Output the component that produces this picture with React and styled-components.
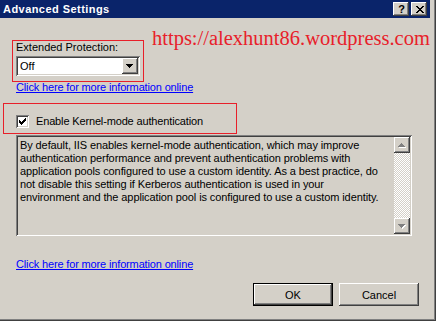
import React from 'react';
import styled, { createGlobalStyle } from 'styled-components';

const Global = createGlobalStyle`
  html, body { margin: 0; padding: 0; background: #d4d0c8; }
  body { width: 436px; height: 321px; overflow: hidden; }
`;

const raised = `
  box-shadow: inset -1px -1px #404040, inset 1px 1px #ffffff, inset -2px -2px #808080, inset 2px 2px #d4d0c8;
`;
const sunken = `
  box-shadow: inset 1px 1px #808080, inset -1px -1px #ffffff, inset 2px 2px #404040, inset -2px -2px #d4d0c8;
`;

const Window = styled.div`
  position: relative;
  width: 436px;
  height: 321px;
  box-sizing: border-box;
  padding: 0 6px 3px 0;
  background: #d4d0c8;
  box-shadow: inset -1px -1px #404040, inset -2px -2px #808080;
  display: flex;
  flex-direction: column;
  font-family: "Liberation Sans", Arial, sans-serif;
  font-size: 11px;
  color: #000;
`;

const TitleBar = styled.div`
  height: 18px;
  flex: none;
  background: #0a246a;
  display: flex;
  align-items: center;
  padding: 0 3px 0 3px;
  gap: 2px;
`;

const Title = styled.div`
  flex: 1;
  color: #fff;
  font-weight: bold;
  font-size: 11px;
  letter-spacing: 0.45px;
  white-space: nowrap;
`;

const CaptionButton = styled.div`
  width: 16px;
  height: 14px;
  box-sizing: border-box;
  background: #d4d0c8;
  ${raised}
  display: flex;
  align-items: center;
  justify-content: center;
  font-weight: bold;
  font-size: 11px;
  line-height: 14px;
  padding-left: 1px;
`;

const Content = styled.div`
  flex: 1;
  display: flex;
  flex-direction: column;
`;

const Watermark = styled.div`
  position: absolute;
  left: 152px;
  top: 28px;
  font-family: "Liberation Serif", "Times New Roman", serif;
  font-size: 20.5px;
  line-height: 1;
  color: #e8202a;
  white-space: nowrap;
`;

const RedFrame = styled.div`
  box-sizing: border-box;
  border: 1px solid #e8202a;
  margin-left: ${p => p.$left}px;
  margin-top: ${p => p.$top}px;
  width: ${p => p.$w}px;
  height: ${p => p.$h}px;
  padding: ${p => p.$pad};
  display: flex;
  flex-direction: ${p => p.$dir || 'column'};
  align-items: ${p => p.$align || 'stretch'};
`;

const Label = styled.div`
  line-height: 13px;
  white-space: nowrap;
`;

const Select = styled.div`
  margin-top: 2px;
  width: 124px;
  height: 20px;
  box-sizing: border-box;
  padding: 2px;
  background: #fff;
  ${sunken}
  display: flex;
  align-items: center;
`;

const SelectValue = styled.div`
  flex: 1;
  padding-left: 2px;
  line-height: 16px;
`;

const ArrowButton = styled.div`
  width: 16px;
  height: 16px;
  box-sizing: border-box;
  background: #d4d0c8;
  ${raised}
  display: flex;
  align-items: center;
  justify-content: center;
`;

const Link = styled.a`
  display: block;
  width: fit-content;
  margin-left: 16px;
  margin-top: ${p => p.$top}px;
  line-height: 13px;
  color: #0000ff;
  text-decoration: underline;
  letter-spacing: -0.15px;
  white-space: nowrap;
  cursor: pointer;
`;

const CheckBox = styled.div`
  width: 13px;
  height: 13px;
  box-sizing: border-box;
  background: #fff;
  ${sunken}
  flex: none;
`;

const CheckLabel = styled.div`
  margin-left: 7px;
  letter-spacing: -0.15px;
  white-space: nowrap;
  line-height: 13px;
`;

const TextBox = styled.div`
  margin: 1px 0 0 16px;
  width: 396px;
  height: 101px;
  box-sizing: border-box;
  padding: 2px;
  background: #d4d0c8;
  ${sunken}
  display: flex;
`;

const TextBody = styled.div`
  flex: 1;
  padding: 2px 0 0 2px;
  letter-spacing: -0.1px;
`;

const TextLine = styled.div`
  line-height: 13px;
  white-space: nowrap;
`;

const ScrollBar = styled.div`
  width: 16px;
  display: flex;
  flex-direction: column;
`;

const ScrollButton = styled.div`
  width: 16px;
  height: 16px;
  box-sizing: border-box;
  background: #d4d0c8;
  ${raised}
  display: flex;
  align-items: center;
  justify-content: center;
`;

const Track = styled.div`
  flex: 1;
  background: repeating-conic-gradient(#ffffff 0 25%, #d4d0c8 0 50%) 0 0 / 2px 2px;
`;

const ButtonRow = styled.div`
  margin-top: 12px;
  display: flex;
  justify-content: flex-end;
  gap: 6px;
  padding-right: 11px;
`;

const Button = styled.div`
  width: 80px;
  height: 23px;
  box-sizing: border-box;
  background: #d4d0c8;
  display: flex;
  align-items: center;
  justify-content: center;
  border: ${p => (p.$default ? '1px solid #000' : 'none')};
  box-shadow: ${p =>
    p.$default
      ? 'inset -1px -1px #404040, inset 1px 1px #ffffff, inset -2px -2px #808080'
      : 'inset -1px -1px #404040, inset 1px 1px #ffffff, inset -2px -2px #808080, inset 2px 2px #d4d0c8'};
`;

const px = (cells, color) =>
  cells.map(([x, y, w = 1, h = 1], i) => (
    <rect key={i} x={x} y={y} width={w} height={h} fill={color} />
  ));

const CloseGlyph = () => (
  <svg width="8" height="7" viewBox="0 0 8 7" shapeRendering="crispEdges">
    {px(
      [
        [0, 0, 2], [6, 0, 2],
        [1, 1, 2], [5, 1, 2],
        [2, 2, 4],
        [3, 3, 2],
        [2, 4, 4],
        [1, 5, 2], [5, 5, 2],
        [0, 6, 2], [6, 6, 2],
      ],
      '#000'
    )}
  </svg>
);

const DownTriangle = ({ color = '#000', shadow }) => (
  <svg width="8" height="5" viewBox="0 0 8 5" shapeRendering="crispEdges">
    {shadow && px([[1, 1, 7], [2, 2, 5], [3, 3, 3], [4, 4, 1]], shadow)}
    {px([[0, 0, 7], [1, 1, 5], [2, 2, 3], [3, 3, 1]], color)}
  </svg>
);

const UpTriangle = ({ color = '#000', shadow }) => (
  <svg width="8" height="5" viewBox="0 0 8 5" shapeRendering="crispEdges">
    {shadow && px([[4, 1, 1], [3, 2, 3], [2, 3, 5], [1, 4, 7]], shadow)}
    {px([[3, 0, 1], [2, 1, 3], [1, 2, 5], [0, 3, 7]], color)}
  </svg>
);

const CheckMark = () => (
  <svg width="13" height="13" viewBox="0 0 13 13" shapeRendering="crispEdges">
    {px(
      [
        [3, 5, 1, 3],
        [4, 6, 1, 3],
        [5, 7, 1, 3],
        [6, 6, 1, 3],
        [7, 5, 1, 3],
        [8, 4, 1, 3],
        [9, 3, 1, 3],
      ],
      '#000'
    )}
  </svg>
);

const lines = [
  'By default, IIS enables kernel-mode authentication, which may improve',
  'authentication performance and prevent authentication problems with',
  'application pools configured to use a custom identity. As a best practice, do',
  'not disable this setting if Kerberos authentication is used in your',
  'environment and the application pool is configured to use a custom identity.',
];

export default function App() {
  return (
    <>
      <Global />
      <Window>
        <TitleBar>
          <Title>Advanced Settings</Title>
          <CaptionButton>?</CaptionButton>
          <CaptionButton>
            <CloseGlyph />
          </CaptionButton>
        </TitleBar>
        <Content>
          <RedFrame $left={12} $top={22} $w={132} $h={42} $pad="0 0 0 3px">
            <Label>Extended Protection:</Label>
            <Select>
              <SelectValue>Off</SelectValue>
              <ArrowButton>
                <DownTriangle />
              </ArrowButton>
            </Select>
          </RedFrame>
          <Link $top={-1}>Click here for more information online</Link>
          <RedFrame
            $left={3}
            $top={9}
            $w={234}
            $h={31}
            $pad="11px 0 0 12px"
            $dir="row"
            $align="flex-start"
          >
            <CheckBox>
              <CheckMark />
            </CheckBox>
            <CheckLabel>Enable Kernel-mode authentication</CheckLabel>
          </RedFrame>
          <TextBox>
            <TextBody>
              {lines.map((l, i) => (
                <TextLine key={i}>{l}</TextLine>
              ))}
            </TextBody>
            <ScrollBar>
              <ScrollButton>
                <UpTriangle color="#808080" shadow="#ffffff" />
              </ScrollButton>
              <Track />
              <ScrollButton>
                <DownTriangle color="#808080" shadow="#ffffff" />
              </ScrollButton>
            </ScrollBar>
          </TextBox>
          <Link $top={22}>Click here for more information online</Link>
          <ButtonRow>
            <Button $default>OK</Button>
            <Button>Cancel</Button>
          </ButtonRow>
        </Content>
        <Watermark>https://alexhunt86.wordpress.com</Watermark>
      </Window>
    </>
  );
}
